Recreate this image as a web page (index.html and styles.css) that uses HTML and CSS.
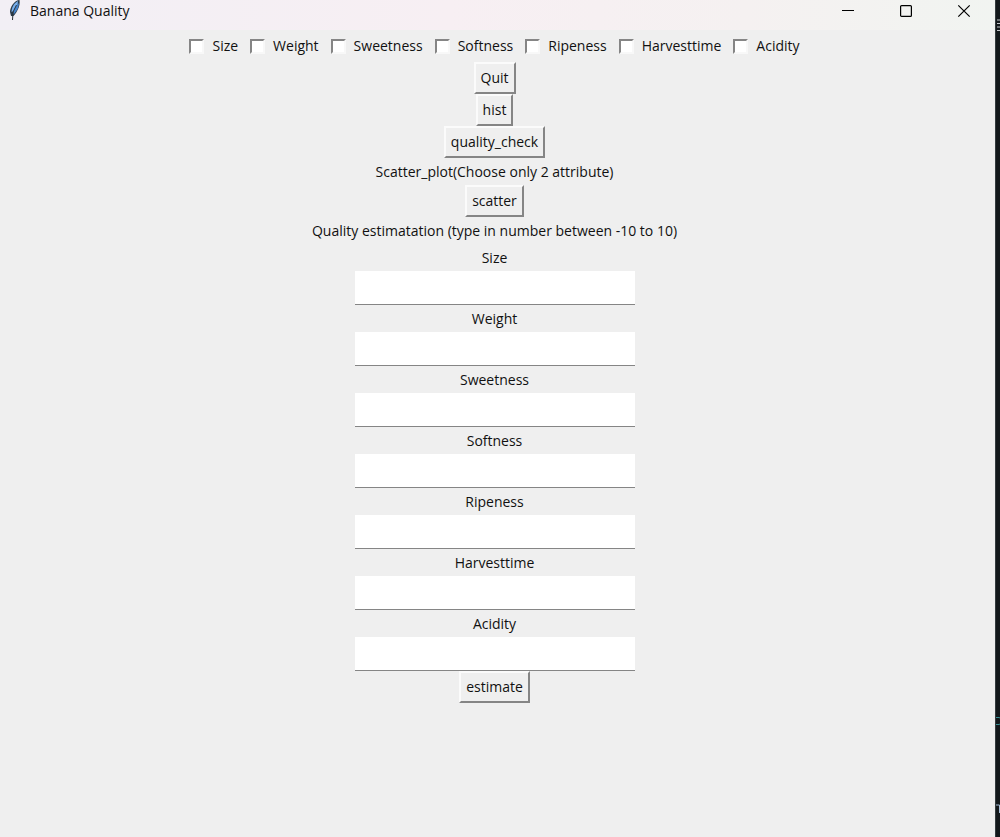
FILE: index.html
```html
<!DOCTYPE html>
<html lang="en">
<head>
<meta charset="utf-8">
<title>Banana Quality</title>
<link rel="stylesheet" href="styles.css">
</head>
<body>
<div class="window">
  <header class="titlebar">
    <svg class="feather" width="14" height="20" viewBox="0 0 14 20" aria-hidden="true">
      <path d="M11 0C6 1 2 7 2 12L3 16L5.500 16C9 12 12.500 6 11.500 0Z" fill="#2b3c4c"/>
      <path d="M10 1C6 3 3.500 8 3.500 12L6 11L9.500 5Z" fill="#78b0ee"/>
      <path d="M10.800 3C11 8 8 12 5.500 14.500L5.500 10Z" fill="#4583cb"/>
      <path d="M8.500 5L5 12L4.500 20" fill="none" stroke="#2a3138"/>
    </svg>
    <h1 class="title">Banana Quality</h1>
    <div class="controls">
      <button class="control" type="button" aria-label="Minimize"><svg width="14" height="14" viewBox="0 0 14 14"><path d="M1 6.500H13" stroke="#000"/></svg></button>
      <button class="control" type="button" aria-label="Maximize"><svg width="14" height="14" viewBox="0 0 14 14"><rect x="1.600" y="1.600" width="10.800" height="10.800" rx="1" fill="none" stroke="#000" stroke-width="1.200"/></svg></button>
      <button class="control" type="button" aria-label="Close"><svg width="14" height="14" viewBox="0 0 14 14"><path d="M1.300 1.300L12.700 12.700M12.700 1.300L1.300 12.700" stroke="#000" stroke-width="1.200"/></svg></button>
    </div>
  </header>
  <main class="content">
    <div class="checks">
      <label class="check"><input type="checkbox" class="box">Size</label>
      <label class="check"><input type="checkbox" class="box">Weight</label>
      <label class="check"><input type="checkbox" class="box">Sweetness</label>
      <label class="check"><input type="checkbox" class="box">Softness</label>
      <label class="check"><input type="checkbox" class="box">Ripeness</label>
      <label class="check"><input type="checkbox" class="box">Harvesttime</label>
      <label class="check"><input type="checkbox" class="box">Acidity</label>
    </div>
    <button class="button" type="button">Quit</button>
    <button class="button" type="button">hist</button>
    <button class="button" type="button">quality_check</button>
    <p class="text">Scatter_plot(Choose only 2 attribute)</p>
    <button class="button" type="button">scatter</button>
    <p class="text">Quality estimatation (type in number between -10 to 10)</p>
    <form class="form">
      <label class="text" for="size">Size</label><input class="field" id="size" type="text">
      <label class="text" for="weight">Weight</label><input class="field" id="weight" type="text">
      <label class="text" for="sweetness">Sweetness</label><input class="field" id="sweetness" type="text">
      <label class="text" for="softness">Softness</label><input class="field" id="softness" type="text">
      <label class="text" for="ripeness">Ripeness</label><input class="field" id="ripeness" type="text">
      <label class="text" for="harvesttime">Harvesttime</label><input class="field" id="harvesttime" type="text">
      <label class="text" for="acidity">Acidity</label><input class="field" id="acidity" type="text">
      <button class="button" type="button">estimate</button>
    </form>
  </main>
</div>
<aside class="behind" aria-hidden="true">
  <svg class="menu" width="4" height="12" viewBox="0 0 4 12"><path d="M0 1H4M0 4.500H4M0 8H4M0 11.500H4" stroke="#c5c8cc"/></svg>
  <svg class="edge" width="5" height="10" viewBox="0 0 5 10"><path d="M0 1.500H3L5 2.500M0 8.500H3L5 7.500" fill="none" stroke="#3a8f93"/></svg>
  <svg class="edge edge-low" width="5" height="10" viewBox="0 0 5 10"><path d="M0 1H3.500V9" fill="none" stroke="#a9bfd8"/><path d="M4.500 2V9" stroke="#8b7449"/></svg>
</aside>
</body>
</html>
```
FILE: styles.css
```css
* { box-sizing: border-box; }

body {
  margin: 0;
  min-height: 100vh;
  display: flex;
  background: #efefef;
  color: #111;
  font: 14px/20px "Open Sans", "Noto Sans", sans-serif;
}

.window { flex: 1; min-width: 0; }

.titlebar {
  display: flex;
  align-items: flex-start;
  height: 30px;
  padding: 0 2px 0 8px;
  background: linear-gradient(90deg, #f2eff5, #f7eff3 45%, #f5f1f1 75%, #f1f4f1);
}

.title {
  margin: 0 auto 0 8px;
  font-size: 14px;
  line-height: 22px;
  font-weight: 400;
}

.controls { display: flex; }

.control {
  width: 58px;
  height: 22px;
  padding: 0;
  border: 0;
  background: none;
  display: flex;
  align-items: center;
  justify-content: center;
}

.content {
  display: flex;
  flex-direction: column;
  align-items: center;
  padding-right: 6px;
}

.checks {
  display: flex;
  align-items: center;
  gap: 12px;
  height: 32px;
}

.check { display: flex; align-items: center; gap: 8px; }

.box {
  appearance: none;
  width: 15px;
  height: 15px;
  margin: 0;
  border: 2px solid;
  border-color: #858585 #f8f8f8 #f8f8f8 #858585;
  background: #fff;
}

.button {
  height: 32px;
  padding: 0 5px;
  border: 2px solid;
  border-color: #fbfbfb #858585 #858585 #fbfbfb;
  background: #efefef;
  color: inherit;
  font: inherit;
}

.text { margin: 0; line-height: 27px; }

.form {
  display: flex;
  flex-direction: column;
  align-items: center;
}

.field {
  width: 280px;
  height: 34px;
  padding: 0 4px;
  border: 0;
  border-bottom: 1px solid #858585;
  background: #fff;
  font: inherit;
}

.behind {
  width: 5px;
  background: #13181b;
  border-left: 1px solid #343b3e;
  position: relative;
  overflow: hidden;
}

.menu { position: absolute; top: 19px; left: 1px; }
.edge { position: absolute; top: 716px; left: 0; }
.edge-low { top: 804px; }
```
